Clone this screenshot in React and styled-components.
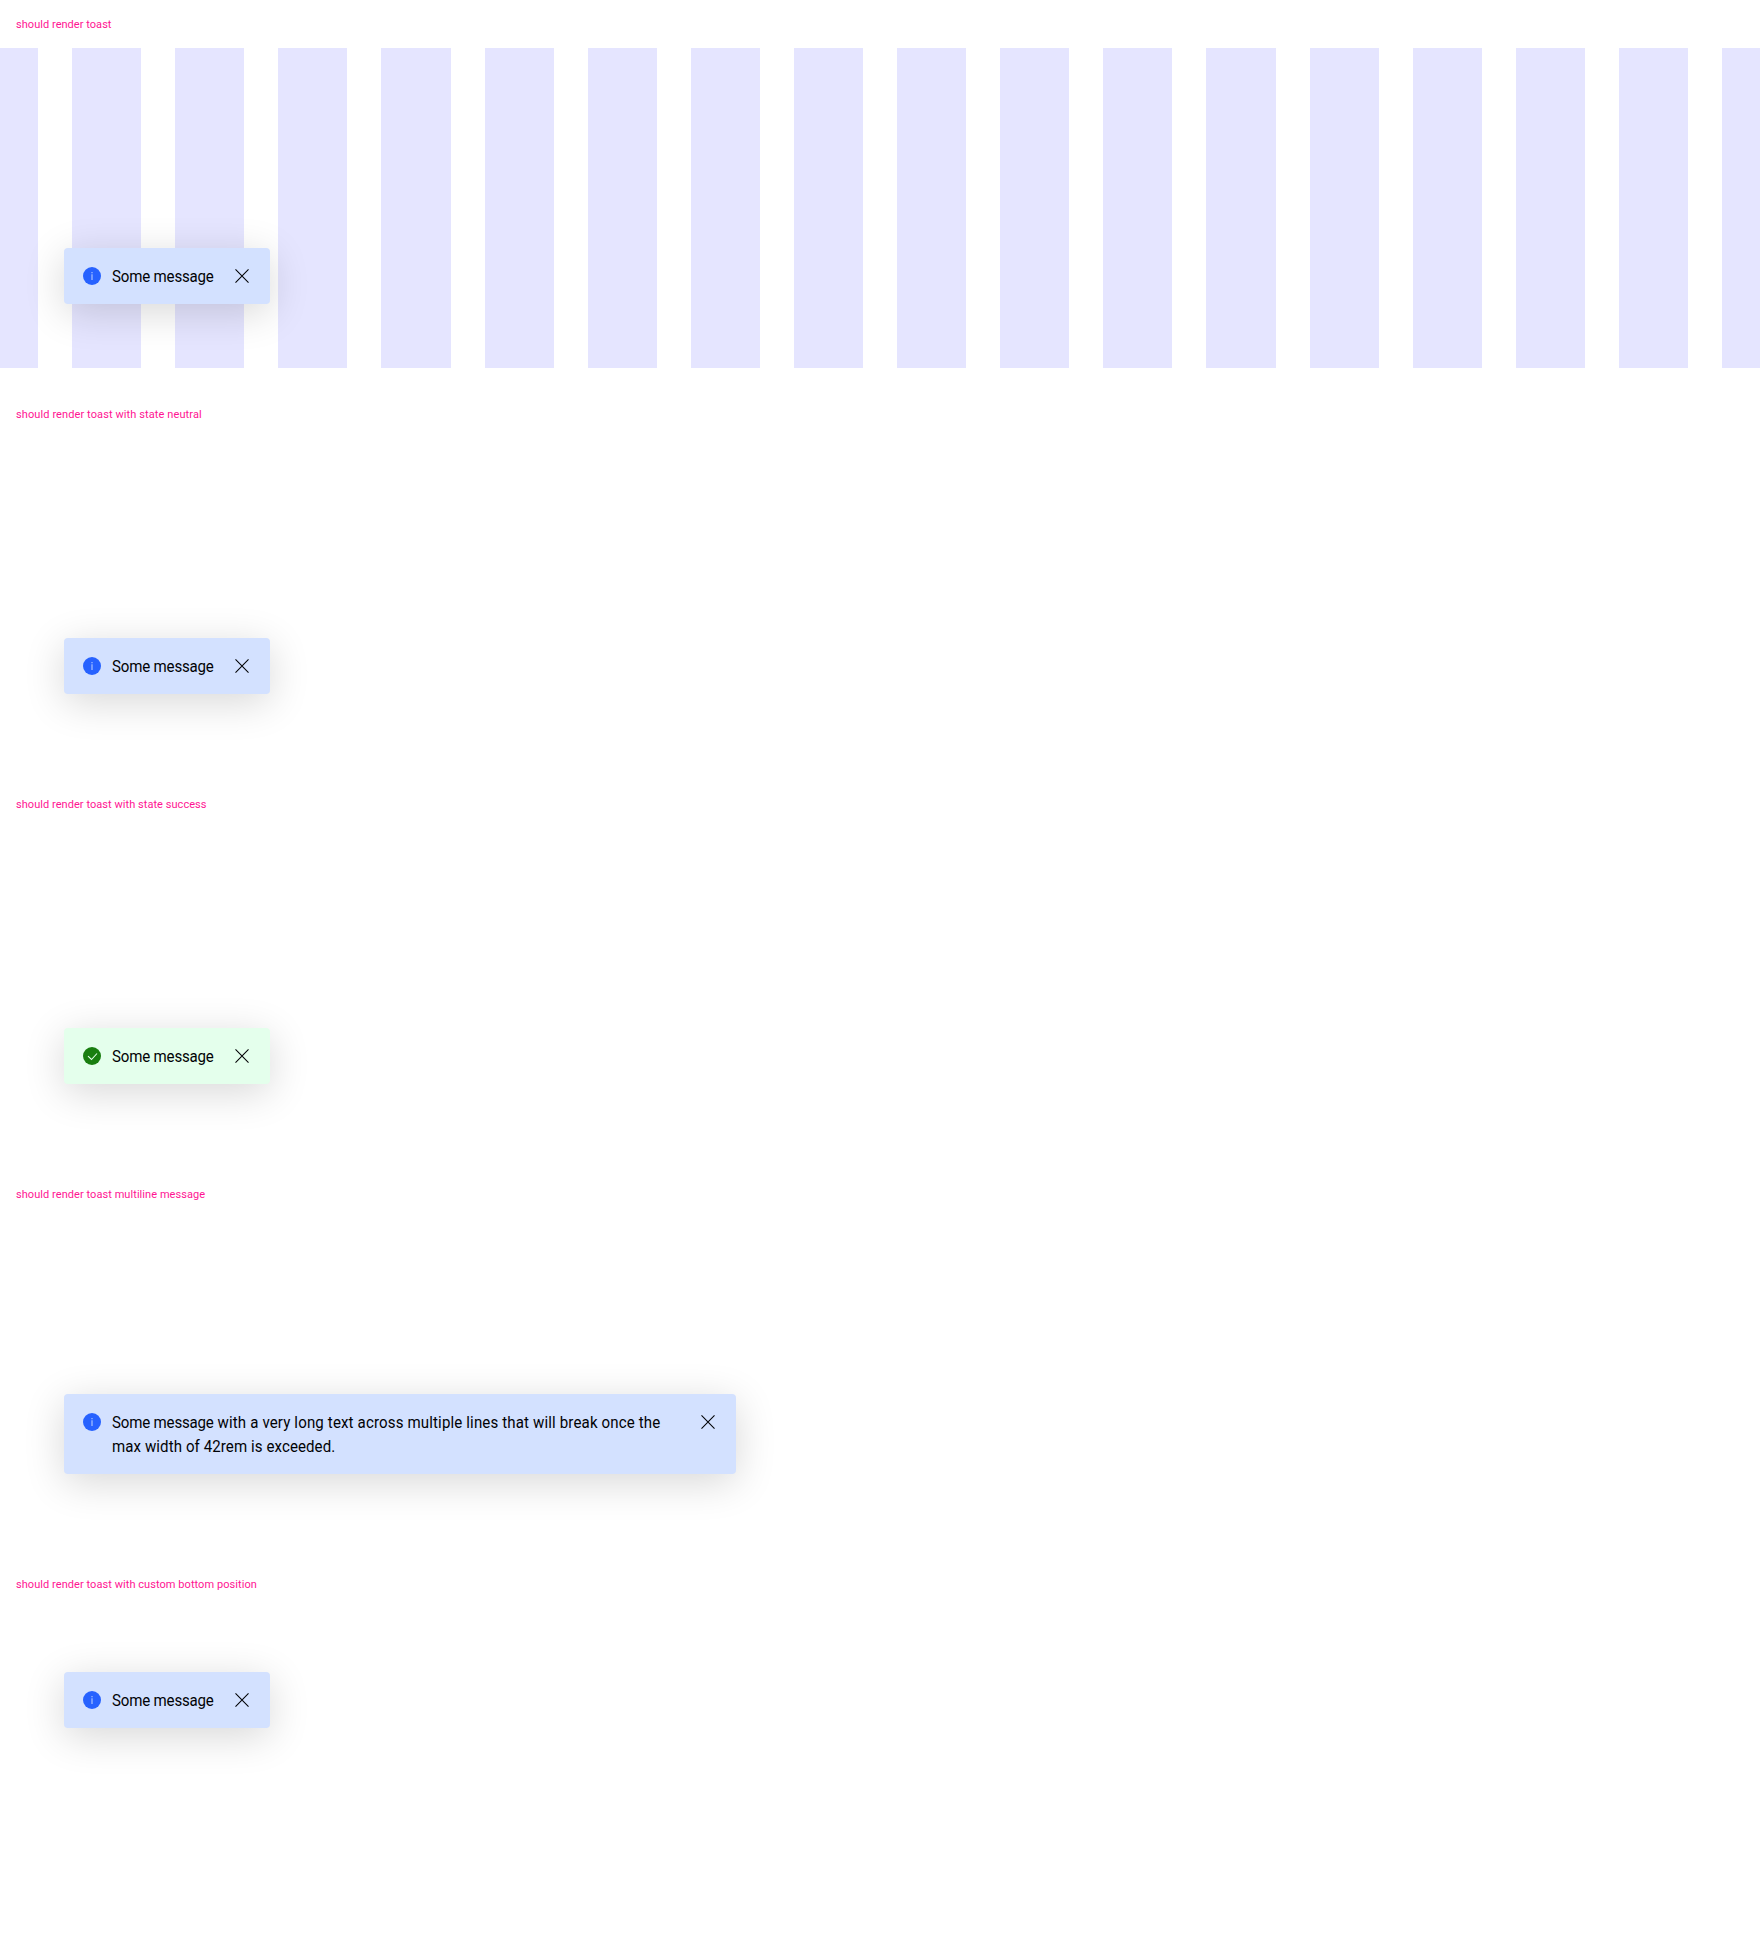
import React from "react";
import styled, { createGlobalStyle } from "styled-components";

const GlobalStyle = createGlobalStyle`
  * { box-sizing: border-box; }
  body {
    margin: 0;
    background: #fff;
    color: #010205;
    font-family: Roboto, "Liberation Sans", sans-serif;
  }
`;

const Page = styled.main`
  display: flex;
  flex-direction: column;
  height: 1950px;
  overflow: hidden;
`;

const Section = styled.section`
  flex: none;
  height: 390px;
`;

const Label = styled.h2`
  margin: 0;
  height: 48px;
  padding: 1px 0 0 16px;
  font-size: 11px;
  font-weight: 400;
  line-height: 48px;
  white-space: nowrap;
  color: #ff1493;
  letter-spacing: ${(p) => p.$tracking || 0}px;
`;

const Stage = styled.div`
  display: grid;
  height: 320px;
`;

const Stripes = styled.div`
  grid-area: 1 / 1;
  display: flex;
  gap: 34px;
  overflow: hidden;
`;

const Stripe = styled.div`
  flex: none;
  width: 69.125px;
  background: #e5e5ff;

  &:first-child {
    width: 38px;
  }
`;

const ToastBox = styled.div`
  grid-area: 1 / 1;
  align-self: end;
  justify-self: start;
  display: flex;
  align-items: flex-start;
  width: ${(p) => (p.$wide ? "672px" : "206px")};
  margin: 0 64px ${(p) => p.$bottom}px;
  padding: 16px;
  border-radius: 4px;
  background: ${(p) => (p.$success ? "#e4ffec" : "#d3e1ff")};
  box-shadow: 0 8px 40px rgba(0, 0, 0, 0.16);
  z-index: 1;
`;

const Message = styled.p`
  flex: 1;
  min-width: 0;
  height: ${(p) => (p.$wide ? 48 : 24)}px;
  margin: 0 16px 0 8px;
  padding-top: 1px;
  font-size: 16px;
  line-height: 24px;
  white-space: pre;
`;

const Line = styled.span`
  display: block;
  transform: scaleX(0.94);
  transform-origin: left;
`;

const Run = styled.span`
  letter-spacing: ${(p) => p.$tracking}px;
`;

const Close = styled.button`
  display: flex;
  flex: none;
  width: 24px;
  height: 24px;
  padding: 0;
  border: 0;
  background: none;
  color: inherit;
`;

const Icon = styled.svg`
  display: block;
  flex: none;
  width: 24px;
  height: 24px;
`;

const StateIcon = ({ success }) =>
  success ? (
    <Icon viewBox="0 0 24 24">
      <circle cx="12" cy="12" r="9" fill="#197e10" />
      <path d="M8 12.2l3.5 3.3L17 9.5" fill="none" stroke="#e4ffec" strokeWidth="1.1" />
    </Icon>
  ) : (
    <Icon viewBox="0 0 24 24">
      <circle cx="12" cy="12" r="9" fill="#2762ff" />
      <path d="M11.5 10.2h1V16h-1zM11.5 8.1h1v1.1h-1z" fill="#d3e1ff" opacity="0.9" />
    </Icon>
  );

const Toast = ({ success, bottom = 64, wide, children }) => (
  <ToastBox $success={success} $bottom={bottom} $wide={wide}>
    <StateIcon success={success} />
    <Message $wide={wide}>{children}</Message>
    <Close aria-label="Close">
      <Icon viewBox="0 0 24 24">
        <path d="M5.5 5.3l13 13.4M18.5 5.3l-13 13.4" fill="none" stroke="currentColor" strokeWidth="1.05" />
      </Icon>
    </Close>
  </ToastBox>
);

const ShortMessage = () => (
  <Line>
    <Run $tracking={-0.18}>Some message</Run>
  </Line>
);

export default function App() {
  return (
    <>
      <GlobalStyle />
      <Page>
        <Section>
          <Label $tracking={0.04}>should render toast</Label>
          <Stage>
            <Stripes>
              {Array.from({ length: 18 }, (_, i) => (
                <Stripe key={i} />
              ))}
            </Stripes>
            <Toast><ShortMessage /></Toast>
          </Stage>
        </Section>
        <Section>
          <Label $tracking={0.1}>should render toast with state neutral</Label>
          <Stage><Toast><ShortMessage /></Toast></Stage>
        </Section>
        <Section>
          <Label $tracking={0.05}>should render toast with state success</Label>
          <Stage><Toast success><ShortMessage /></Toast></Stage>
        </Section>
        <Section>
          <Label $tracking={0.06}>should render toast multiline message</Label>
          <Stage>
            <Toast wide>
              <Line>
                <Run $tracking={-0.18}>Some message</Run>
                <Run $tracking={0.157}>{" with a very long text across multiple lines that will break once the"}</Run>
              </Line>
              <Line>
                <Run $tracking={0.1}>max width of 42rem is exceeded.</Run>
              </Line>
            </Toast>
          </Stage>
        </Section>
        <Section>
          <Label $tracking={0.06}>should render toast with custom bottom position</Label>
          <Stage><Toast bottom={200}><ShortMessage /></Toast></Stage>
        </Section>
      </Page>
    </>
  );
}
